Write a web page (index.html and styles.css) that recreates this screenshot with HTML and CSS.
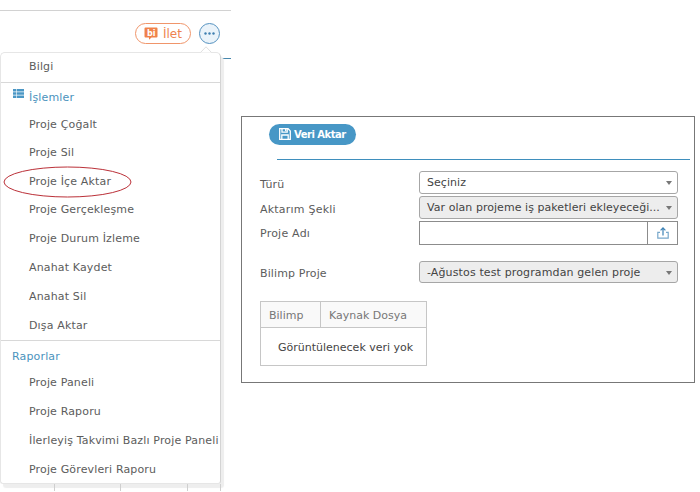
FILE: index.html
```
<!DOCTYPE html>
<html lang="tr">
  <head>
    <meta charset="UTF-8" />
    <meta name="viewport" content="width=device-width, initial-scale=1.0" />
    <title>Proje İçe Aktar</title>
    <link rel="stylesheet" href="styles.css">
  </head>
  <body>
    <div class="page">
      <div class="sidebar">
        <div class="toolbar">
          <button class="send">
            <svg class="send-icon" width="14" height="13" viewBox="0 0 14 13">
              <path d="M1.5 0.5h11a1 1 0 0 1 1 1v8a1 1 0 0 1-1 1H7.5L5 12.7V10.5H1.5a1 1 0 0 1-1-1v-8a1 1 0 0 1 1-1z" fill="#f0824a" />
              <text class="send-logo" x="3" y="8.6">bi</text>
            </svg>
            <span>İlet</span>
          </button>
          <button class="more">
            <svg width="11" height="3" viewBox="0 0 11 3" fill="#3f7fb0">
              <circle cx="1.5" cy="1.5" r="1.2" />
              <circle cx="5.5" cy="1.5" r="1.2" />
              <circle cx="9.5" cy="1.5" r="1.2" />
            </svg>
          </button>
        </div>
        <div class="rule"></div>
        <div class="grid-lines"><i></i><i></i><i></i><i></i></div>

        <div class="menu">
          <svg class="menu-arrow" width="12" height="7" viewBox="0 0 12 7">
            <path d="M0.5 6.5L6 0.8L11.5 6.5" fill="#fff" stroke="#e0e0e0" />
          </svg>
          <ul class="info">
            <li>Bilgi</li>
          </ul>
          <h3 class="with-icon">
            <svg width="11" height="9" viewBox="0 0 11 9" fill="#4b97c5">
              <path d="M0 0h3v2.5H0zM3.6 0H11v2.5H3.6zM0 3.2h3v2.5H0zM3.6 3.2H11v2.5H3.6zM0 6.4h3V9H0zM3.6 6.4H11V9H3.6z" />
            </svg>
            <span>İşlemler</span>
          </h3>
          <ul class="actions">
            <li><span class="cut">Proje Çoğalt</span></li>
            <li>Proje Sil</li>
            <li>Proje İçe Aktar
              <svg class="mark" width="129" height="32" viewBox="0 0 129 32">
                <ellipse cx="64.5" cy="16" rx="63.5" ry="15" fill="none" stroke="#bb3038" />
              </svg>
            </li>
            <li>Proje Gerçekleşme</li>
            <li>Proje Durum İzleme</li>
            <li>Anahat Kaydet</li>
            <li>Anahat Sil</li>
            <li>Dışa Aktar</li>
          </ul>
          <h3>Raporlar</h3>
          <ul>
            <li>Proje Paneli</li>
            <li>Proje Raporu</li>
            <li>İlerleyiş Takvimi Bazlı Proje Paneli</li>
            <li>Proje Görevleri Raporu</li>
          </ul>
        </div>
      </div>

      <div class="dialog">
        <button class="transfer">
          <svg width="12" height="12" viewBox="0 0 12 12" fill="none" stroke="#fff" stroke-width="1.3">
            <path d="M0.7 0.7h8.4l2.2 2.2v8.4H0.7z" />
            <path d="M3 0.7v3.5h5.2V0.7M2.8 11.3V7h6.4v4.3" />
            <path d="M6.7 1v2.2" />
          </svg>
          <span>Veri Aktar</span>
        </button>
        <hr>
        <div class="form">
          <label>Türü</label>
          <div class="select">Seçiniz</div>
          <label>Aktarım Şekli</label>
          <div class="select disabled">Var olan projeme iş paketleri ekleyeceği...</div>
          <label class="name">Proje Adı</label>
          <div class="file">
            <div class="upload">
              <svg width="12" height="12" viewBox="0 0 12 12" fill="none" stroke="#3d82b5" stroke-width="1.2">
                <path d="M3 5.4H0.8v5.8h10.4V5.4H9" stroke="#78a8cb" />
                <path d="M6 8.5V1M3.6 3.3L6 0.9l2.4 2.4" />
              </svg>
            </div>
          </div>
          <label class="project">Bilimp Proje</label>
          <div class="select disabled project">-Ağustos test programdan gelen proje</div>
        </div>
        <table>
          <tr><th class="first">Bilimp</th><th>Kaynak Dosya</th></tr>
          <tr><td colspan="2">Görüntülenecek veri yok</td></tr>
        </table>
      </div>
    </div>
  </body>
</html>
```
FILE: styles.css
```
* {
  padding: 0;
  margin: 0;
  box-sizing: border-box;
}
body {
  background-color: #fff;
  font-family: Verdana, "DejaVu Sans", sans-serif;
  font-size: 11px;
  color: #5c5c5c;
}
button {
  font: inherit;
}
.page {
  display: flex;
  height: 492px;
  overflow: hidden;
}

/* left side */
.sidebar {
  position: relative;
  width: 231px;
  height: 492px;
  padding-top: 10px;
  display: flex;
  flex-direction: column;
}
.toolbar {
  border-top: 1px solid #d2d2d2;
  height: 48px;
  padding: 12px 11px 0 0;
  display: flex;
  justify-content: flex-end;
  gap: 8px;
}
.send {
  width: 56px;
  height: 21px;
  border: 1px solid #f0956a;
  border-radius: 11px;
  background: #fff;
  color: #ee8350;
  display: flex;
  align-items: center;
  padding-left: 8px;
  gap: 5px;
  font-size: 12px;
}
.send-logo {
  font: bold 8px "DejaVu Sans", sans-serif;
  fill: #fff;
}
.more {
  width: 21px;
  height: 21px;
  border: 1px solid #5592c0;
  border-radius: 50%;
  background: #eaf3fa;
  display: flex;
  align-items: center;
  justify-content: center;
}
.rule {
  height: 1px;
  background: #4787ad;
}
.grid-lines {
  position: relative;
  z-index: 1;
  margin-top: auto;
  height: 7px;
  margin-bottom: 1px;
  display: grid;
  grid-template-columns: 55px 66px 67px 33px;
}
.grid-lines i {
  border-right: 1px solid #cfcfcf;
}

/* dropdown */
.menu {
  position: absolute;
  left: 0;
  top: 52px;
  width: 221px;
  height: 432px;
  background: #fff;
  border: 1px solid #e6e6e6;
  border-right-color: #d4d4d4;
  border-radius: 5px 5px 3px 3px;
  box-shadow: 3px 4px 1px #eee;
  letter-spacing: 0.15px;
}
.menu-arrow {
  position: absolute;
  right: 8px;
  top: -7px;
}
.menu ul {
  list-style: none;
}
.menu li {
  position: relative;
  height: 28.8px;
  line-height: 29px;
  padding-left: 28px;
  white-space: nowrap;
}
.menu .info {
  height: 30px;
  border-bottom: 1px solid #d8d8d8;
}
.menu .info li,
.menu .actions li {
  line-height: 28px;
}
.menu h3 {
  height: 27px;
  line-height: 31px;
  padding-left: 11px;
  font-size: 11px;
  font-weight: normal;
  color: #4b93bd;
}
.menu .with-icon {
  display: flex;
  padding-left: 12px;
  gap: 5px;
  line-height: 29px;
}
.with-icon svg {
  margin-top: 6px;
}
.actions {
  border-bottom: 1px solid #d8d8d8;
}
.cut {
  display: inline-block;
  line-height: 30px;
  clip-path: inset(10px 0 0 0);
}
.mark {
  position: absolute;
  left: 2px;
  top: -2px;
}

/* import dialog */
.dialog {
  width: 454px;
  height: 267px;
  margin: 116px 0 0 10px;
  border: 1px solid #777;
  padding: 7px 4px 0 18px;
}
.transfer {
  margin-left: 9px;
  width: 87px;
  height: 21px;
  border: none;
  border-radius: 11px;
  background: #4797c6;
  color: #fff;
  font-size: 10px;
  font-weight: bold;
  letter-spacing: -0.5px;
  display: flex;
  align-items: center;
  padding-left: 10px;
  gap: 3px;
}
.transfer svg {
  margin-top: -2px;
}
.dialog hr {
  border: none;
  height: 1px;
  margin: 14px 0 11px 17px;
  background: #3f8fbd;
}
.form {
  display: grid;
  grid-template-columns: 159px 259px;
  grid-template-rows: 23px 23px 24px 22px;
  row-gap: 2px;
}
.form label {
  line-height: 27px;
  letter-spacing: 0.22px;
}
.form .name {
  line-height: 25px;
}
.select {
  position: relative;
  border: 1px solid #a6a6a6;
  border-radius: 3px;
  line-height: 22px;
  padding-left: 7px;
  color: #444;
  white-space: nowrap;
  letter-spacing: 0.05px;
}
.select::after {
  content: "";
  position: absolute;
  right: 5px;
  top: 9px;
  border: 3px solid transparent;
  border-top: 4px solid #777;
  border-bottom: none;
}
.disabled {
  background: #ededed;
}
.file {
  border: 1px solid #8c8c8c;
  display: flex;
  justify-content: flex-end;
}
.upload {
  width: 30px;
  border-left: 1px solid #8c8c8c;
  display: flex;
  align-items: center;
  justify-content: center;
}
.form .project {
  margin-top: 14px;
  height: 22px;
  line-height: 21px;
  letter-spacing: 0.13px;
}
.form label.project {
  line-height: 25px;
}
.dialog table {
  width: 167px;
  margin-top: 32px;
  border-collapse: collapse;
}
.dialog th,
.dialog td {
  border: 1px solid #c6c6c6;
}
.dialog th {
  height: 26px;
  padding: 2px 0 0 8px;
  background: #f9f9f9;
  color: #777;
  font-weight: normal;
  text-align: left;
}
.dialog .first {
  width: 60px;
}
.dialog td {
  height: 38px;
  padding: 2px 0 0 17px;
  color: #444;
  white-space: nowrap;
}
```
